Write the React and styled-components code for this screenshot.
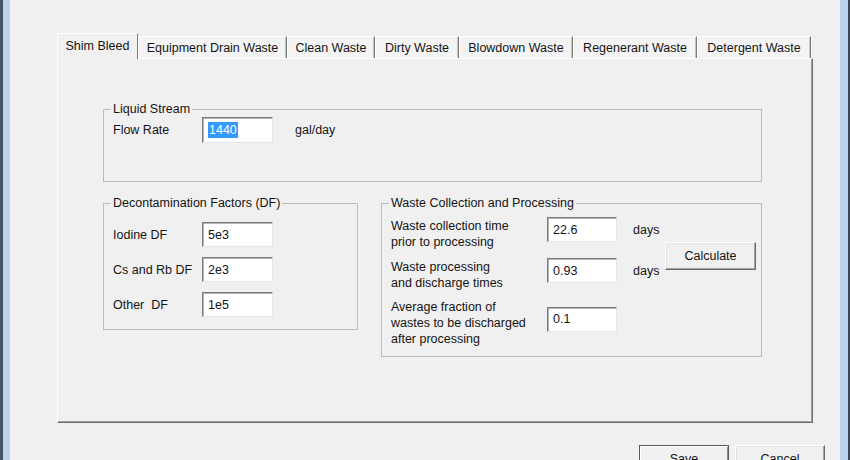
import React from "react";
import styled, { createGlobalStyle } from "styled-components";

/* 전역 스타일 */
const GlobalStyle = createGlobalStyle`
  html, body {
    margin: 0;
    padding: 0;
    background: #f0f0f0;
  }
  body {
    font-family: "Liberation Sans", Arial, sans-serif;
    font-size: 12.5px;
    color: #141414;
  }
`;

const TABS = [
  { label: "Shim Bleed", width: 81 },
  { label: "Equipment Drain Waste", width: 149 },
  { label: "Clean Waste", width: 88 },
  { label: "Dirty Waste", width: 84 },
  { label: "Blowdown Waste", width: 114 },
  { label: "Regenerant Waste", width: 124 },
  { label: "Detergent Waste", width: 114 },
];

const DF_ROWS = [
  { label: "Iodine DF", value: "5e3" },
  { label: "Cs and Rb DF", value: "2e3" },
  { label: "Other  DF", value: "1e5" },
];

const WASTE_ROWS = [
  { lines: ["Waste collection time", "prior to processing"], value: "22.6", unit: "days" },
  { lines: ["Waste processing", "and discharge times"], value: "0.93", unit: "days" },
  { lines: ["Average fraction of", "wastes to be discharged", "after processing"], value: "0.1" },
];

function App() {
  return (
    <>
      <GlobalStyle />
      <Window>
        <Frame>
          <TabStrip>
            {TABS.map((t, i) => (
              <Tab key={t.label} $width={t.width} $active={i === 0}>
                {t.label}
              </Tab>
            ))}
          </TabStrip>

          <TabPanel>
            <GroupBox $width={659} $height={80} $pad="0 0 0 9px">
              <Legend>Liquid Stream</Legend>
              <FieldRow>
                <FieldLabel>Flow Rate</FieldLabel>
                <TextBox $width={71} $height={26}>
                  <Selected>1440</Selected>
                </TextBox>
                <Unit>gal/day</Unit>
              </FieldRow>
            </GroupBox>

            <BoxRow>
              <GroupBox $width={255} $height={134} $pad="11px 0 0 9px">
                <Legend>Decontamination Factors (DF)</Legend>
                <FieldStack>
                  {DF_ROWS.map((r) => (
                    <FieldRow key={r.label}>
                      <FieldLabel>{r.label}</FieldLabel>
                      <TextBox $width={71} $height={25}>{r.value}</TextBox>
                    </FieldRow>
                  ))}
                </FieldStack>
              </GroupBox>

              <GroupBox $width={381} $height={161} $pad="6px 0 0 9px">
                <Legend>Waste Collection and Processing</Legend>
                <WasteGrid>
                  {WASTE_ROWS.map((r, i) => (
                    <React.Fragment key={i}>
                      <MultiLabel style={{ gridRow: i + 1 }}>
                        {r.lines.map((l) => (
                          <span key={l}>{l}</span>
                        ))}
                      </MultiLabel>
                      <TextBox $width={70} $height={25} $lift style={{ gridRow: i + 1 }}>
                        {r.value}
                      </TextBox>
                      {r.unit && <DaysText style={{ gridRow: i + 1 }}>{r.unit}</DaysText>}
                    </React.Fragment>
                  ))}
                  <CalcButton type="button">Calculate</CalcButton>
                </WasteGrid>
              </GroupBox>
            </BoxRow>
          </TabPanel>

          <ButtonBar>
            <DialogButton type="button" $default>Save</DialogButton>
            <DialogButton type="button">Cancel</DialogButton>
          </ButtonBar>
        </Frame>
      </Window>
    </>
  );
}

const Window = styled.div`
  width: 850px;
  height: 460px;
  box-sizing: border-box;
  overflow: hidden;
  display: flex;
  border-left: 3px solid #46525f;
  border-right: 2px solid #3a4654;
  background: #f0f0f0;
`;

const Frame = styled.div`
  flex: 1;
  display: flex;
  flex-direction: column;
  border-left: 7px solid #bbd3ed;
  border-right: 8px solid #bbd3ed;
  padding: 33px 0 0 47px;
`;

const TabStrip = styled.div`
  display: flex;
  align-items: flex-end;
  flex-shrink: 0;
  height: 25px;
  position: relative;
  z-index: 1;
`;

const Tab = styled.div`
  box-sizing: border-box;
  width: ${(p) => p.$width}px;
  height: ${(p) => (p.$active ? 26 : 22)}px;
  margin-bottom: ${(p) => (p.$active ? -1 : 0)}px;
  display: flex;
  align-items: center;
  justify-content: center;
  padding-bottom: ${(p) => (p.$active ? 2 : 0)}px;
  white-space: nowrap;
  background: ${(p) => (p.$active ? "#f0f0f0" : "#f4f4f4")};
  border-top: 1px solid #ffffff;
  border-left: 1px solid #ffffff;
  border-right: 1px solid #7c7c7c;
  box-shadow: ${(p) => (p.$active ? "none" : "inset -1px 0 0 #c4c4c4")};
`;

const TabPanel = styled.div`
  flex-shrink: 0;
  width: 756px;
  height: 365px;
  box-sizing: border-box;
  border-top: 1px solid #ffffff;
  border-left: 1px solid #ffffff;
  border-right: 1px solid #6e6e6e;
  border-bottom: 1px solid #6e6e6e;
  box-shadow: inset -1px -1px 0 #a0a0a0;
  padding: 43px 0 0 45px;
  display: flex;
  flex-direction: column;
  gap: 14px;
`;

const GroupBox = styled.fieldset`
  margin: 0;
  min-width: 0;
  box-sizing: border-box;
  width: ${(p) => p.$width}px;
  height: ${(p) => p.$height}px;
  padding: ${(p) => p.$pad};
  border: 1px solid #bcbcbc;
`;

const Legend = styled.legend`
  padding: 0 2px;
  margin-left: -2px;
  line-height: 15px;
`;

const BoxRow = styled.div`
  display: flex;
  align-items: flex-start;
  gap: 23px;
`;

const FieldStack = styled.div`
  display: flex;
  flex-direction: column;
  gap: 10px;
`;

const FieldRow = styled.div`
  display: flex;
  align-items: center;
`;

const FieldLabel = styled.span`
  width: 89px;
  white-space: pre;
`;

const TextBox = styled.div`
  box-sizing: border-box;
  width: ${(p) => p.$width}px;
  height: ${(p) => p.$height}px;
  margin-bottom: ${(p) => (p.$lift ? 8 : 0)}px;
  background: #ffffff;
  border: 1px solid;
  border-color: #7a7a7a #e6e6e6 #e6e6e6 #7a7a7a;
  box-shadow: inset 1px 1px 0 #b5b5b5;
  padding-left: 5px;
  display: flex;
  align-items: center;
`;

const Selected = styled.span`
  background: #3399ff;
  color: #ffffff;
  padding: 1px 1px;
`;

const Unit = styled.span`
  margin-left: 22px;
`;

const WasteGrid = styled.div`
  display: grid;
  grid-template-columns: 156px 70px 48px 91px;
  row-gap: 8px;
  align-items: center;
`;

const MultiLabel = styled.div`
  grid-column: 1;
  display: flex;
  flex-direction: column;
  line-height: 16px;
`;

const DaysText = styled.span`
  grid-column: 3;
  padding-left: 16px;
  margin-bottom: 8px;
`;

const raised = `
  background: #f0f0f0;
  border: 1px solid;
  border-color: #ffffff #6a6a6a #6a6a6a #ffffff;
  box-shadow: inset -1px -1px 0 #a3a3a3, inset 1px 1px 0 #e3e3e3;
  font-family: "Liberation Sans", Arial, sans-serif;
  font-size: 12.5px;
  color: #141414;
  padding: 0;
`;

const CalcButton = styled.button`
  ${raised}
  grid-column: 4;
  grid-row: 1 / span 2;
  align-self: center;
  height: 28px;
  width: 91px;
  margin-top: 4px;
`;

const ButtonBar = styled.div`
  display: flex;
  flex-shrink: 0;
  justify-content: flex-end;
  gap: 6px;
  margin-top: 22px;
  padding-right: 15px;
`;

const DialogButton = styled.button`
  ${raised}
  width: 90px;
  height: 25px;
  padding-top: 2px;
  ${(p) => (p.$default ? "border-color: #5a5a5a; box-shadow: inset 1px 1px 0 #ffffff, inset -1px -1px 0 #8c8c8c;" : "")}
`;

export default App;
